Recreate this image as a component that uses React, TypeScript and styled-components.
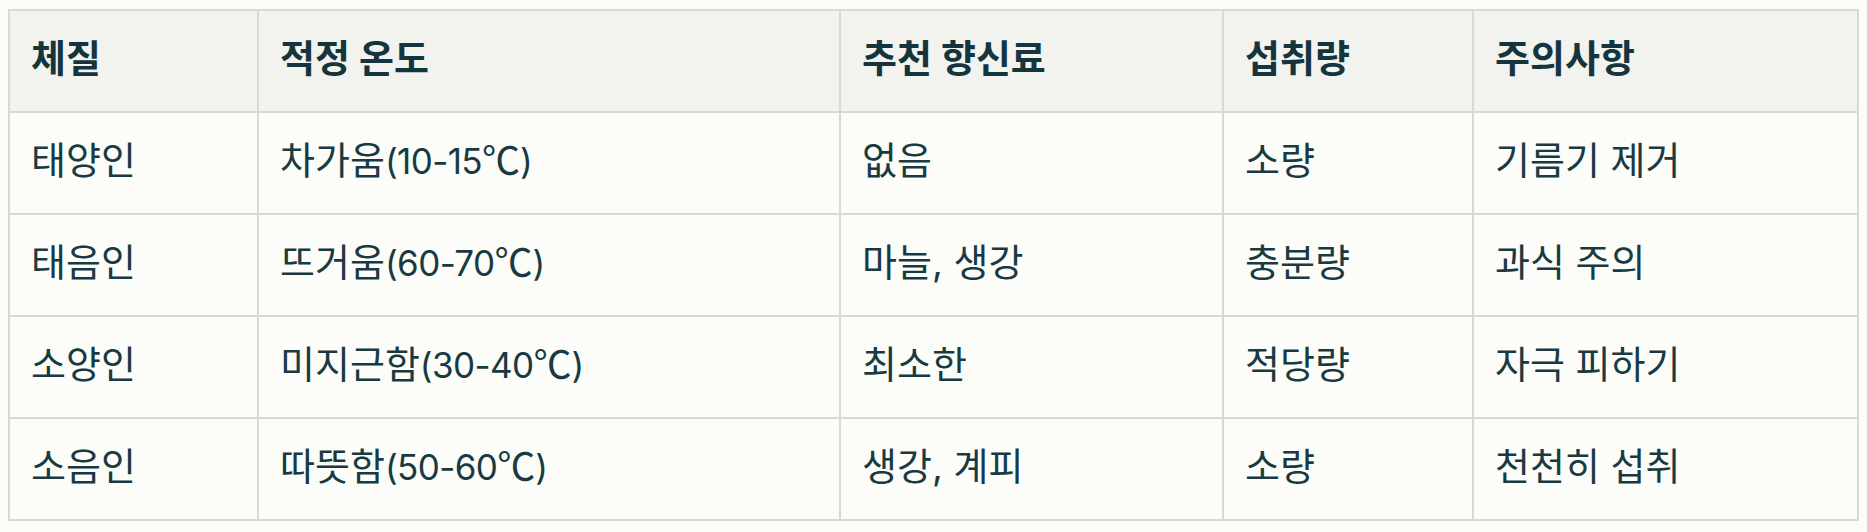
import React from "react";
import styled, { createGlobalStyle } from "styled-components";

const GlobalStyle = createGlobalStyle`
  html, body {
    background: #fcfcf8;
  }
  body {
    margin: 9px 8px 8px 8px;
    font-family: "Inter", "Noto Sans CJK KR", sans-serif;
    color: #163840;
  }
`;

const Table = styled.table`
  width: 100%;
  table-layout: fixed;
  border-collapse: collapse;
  border: 2px solid #d9d9d1;
  font-size: 38px;
`;

const HeadRow = styled.tr`
  background: #f2f2ee;
`;

const BodyRow = styled.tr`
  background: #fcfcf8;
`;

const Th = styled.th`
  text-align: left;
  font-weight: 700;
  padding: 0 21px 4px 21px;
  line-height: 1.3;
  height: 96px;
  box-sizing: content-box;
  border: 2px solid #d9d9d1;
  color: #14353d;
  white-space: nowrap;
  vertical-align: middle;
`;

const Td = styled.td`
  text-align: left;
  font-weight: 400;
  padding: 0 21px 4px 21px;
  line-height: 1.3;
  height: 96px;
  box-sizing: content-box;
  border: 2px solid #d9d9d1;
  color: #183a42;
  white-space: nowrap;
  vertical-align: middle;
`;

const Latin = styled.span`
  font-size: 35px;
  letter-spacing: -0.6px;
  line-height: 1;
`;

const Unit = styled.span`
  font-family: "Noto Sans CJK KR", sans-serif;
  line-height: 1;
`;

const Col = styled.col<{ $w?: number }>`
  width: ${(p) => (p.$w ? `${p.$w}px` : "auto")};
`;

const headers = ["체질", "적정 온도", "추천 향신료", "섭취량", "주의사항"];

const rows = [
  ["태양인", "차가움", "(10-15", ")", "없음", "소량", "기름기 제거"],
  ["태음인", "뜨거움", "(60-70", ")", "마늘, 생강", "충분량", "과식 주의"],
  ["소양인", "미지근함", "(30-40", ")", "최소한", "적당량", "자극 피하기"],
  ["소음인", "따뜻함", "(50-60", ")", "생강, 계피", "소량", "천천히 섭취"],
];

export default function App() {
  return (
    <>
      <GlobalStyle />
      <Table>
        <colgroup>
          <Col $w={249} />
          <Col $w={582} />
          <Col $w={383} />
          <Col $w={250} />
          <Col />
        </colgroup>
        <thead>
          <HeadRow>
            {headers.map((h) => (
              <Th key={h}>{h}</Th>
            ))}
          </HeadRow>
        </thead>
        <tbody>
          {rows.map((r) => (
            <BodyRow key={r[0]}>
              <Td>{r[0]}</Td>
              <Td>
                {r[1]}
                <Latin>{r[2]}</Latin>
                <Unit>℃</Unit>
                <Latin>{r[3]}</Latin>
              </Td>
              <Td>{r[4]}</Td>
              <Td>{r[5]}</Td>
              <Td>{r[6]}</Td>
            </BodyRow>
          ))}
        </tbody>
      </Table>
    </>
  );
}
